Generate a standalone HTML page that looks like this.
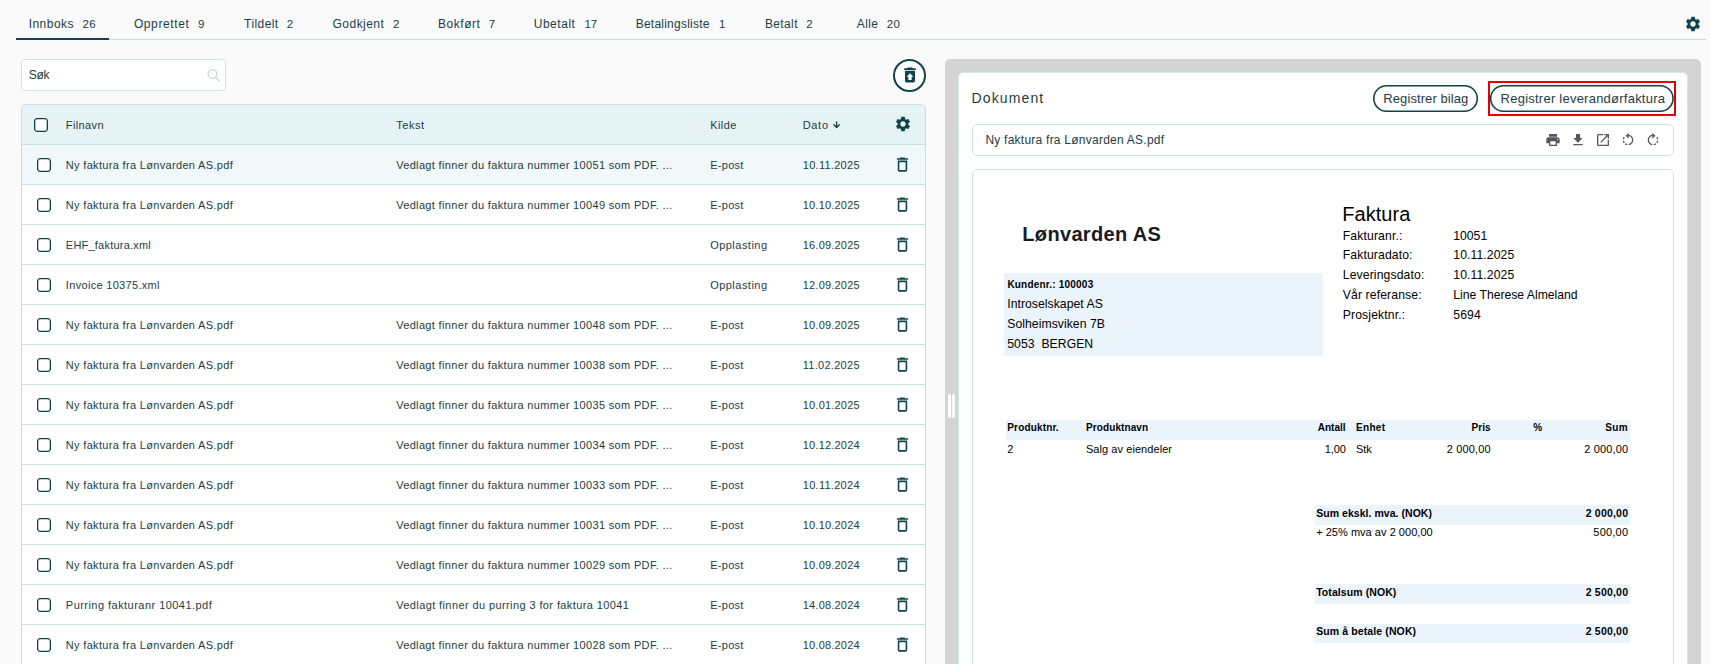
<!DOCTYPE html>
<html lang="no">
<head>
<meta charset="utf-8">
<title>Innboks</title>
<style>
html,body{margin:0;padding:0;}
body{width:1710px;height:664px;overflow:hidden;background:#fafafa;position:relative;font-family:"Liberation Sans",sans-serif;}
.t{position:absolute;white-space:pre;line-height:20px;height:20px;}
.a{position:absolute;}
svg{position:absolute;display:block;}
.cb{position:absolute;width:12px;height:12px;border:1px solid #0e4048;border-radius:3px;background:#fff;box-shadow:inset 0 0 0 0.3px #0e4048;}
.row{position:absolute;left:22px;width:903px;height:39px;border-top:1px solid #c6e0e4;background:#fff;}
.band{position:absolute;background:#ebf4fb;}
</style>
</head>
<body>
<!-- tabs line -->
<div class="a" style="left:16px;top:39px;width:1690px;height:1px;background:#c6e0e4"></div>
<div class="a" style="left:16px;top:38px;width:93px;height:2px;background:#10434b"></div>
<!-- top right gear -->
<svg style="left:1684px;top:15px" width="18" height="18" viewBox="0 0 24 24"><path fill="#10434b" d="M19.14 12.94c.04-.3.06-.61.06-.94 0-.32-.02-.64-.07-.94l2.03-1.58c.18-.14.23-.41.12-.61l-1.92-3.32c-.12-.22-.37-.29-.59-.22l-2.39.96c-.5-.38-1.03-.7-1.62-.94l-.36-2.54c-.04-.24-.24-.41-.48-.41h-3.84c-.24 0-.43.17-.47.41l-.36 2.54c-.59.24-1.13.57-1.62.94l-2.39-.96c-.22-.08-.47 0-.59.22L2.74 8.87c-.12.21-.08.47.12.61l2.03 1.58c-.05.3-.09.63-.09.94s.02.64.07.94l-2.03 1.58c-.18.14-.23.41-.12.61l1.92 3.32c.12.22.37.29.59.22l2.39-.96c.5.38 1.03.7 1.62.94l.36 2.54c.05.24.24.41.48.41h3.84c.24 0 .44-.17.47-.41l.36-2.54c.59-.24 1.13-.56 1.62-.94l2.39.96c.22.08.47 0 .59-.22l1.92-3.32c.12-.22.07-.47-.12-.61l-2.01-1.58zM12 15.6c-1.98 0-3.6-1.62-3.6-3.6s1.62-3.6 3.6-3.6 3.6 1.62 3.6 3.6-1.62 3.6-3.6 3.6z"/></svg>
<!-- search -->
<div class="a" style="left:21px;top:59px;width:203px;height:30px;border:1px solid #cfe4e8;border-radius:4px;background:#fff"></div>
<svg style="left:204.7px;top:67px" width="17" height="17" viewBox="0 0 24 24" fill="none" stroke="#c6cee0" stroke-width="1.6" stroke-linecap="round"><circle cx="10.5" cy="10" r="6.2"/><path d="M15.2 14.8L20.5 20.2"/></svg>
<!-- circle restore button -->
<div class="a" style="left:893px;top:58.5px;width:29px;height:29px;border:2px solid #10434b;border-radius:50%;background:#fff"></div>
<svg style="left:899.5px;top:64.5px" width="20" height="20" viewBox="0 0 24 24"><path fill="#10434b" d="M19 4h-3.500l-1-1h-5l-1 1H5v2h14zM6 19c0 1.100.9 2 2 2h8c1.100 0 2-.9 2-2V7H6v12zm8-5v4h-4v-4H8l4-4 4 4h-2z"/></svg>
<!-- table -->
<div class="a" style="left:21px;top:104px;width:903px;height:600px;border:1px solid #c6e0e4;border-radius:5px 5px 0 0;background:#fff;overflow:hidden">
<div class="a" style="left:0;top:0;width:903px;height:39px;background:#e6f3f5"></div>
</div>
<div class="row" style="top:144px;background:#f0f8fa"></div>
<div class="cb" style="left:37px;top:158px"></div>
<svg style="left:893.2px;top:154.75px" width="19" height="19" viewBox="0 0 24 24"><path fill="#10434b" d="M6 19c0 1.100.9 2 2 2h8c1.100 0 2-.9 2-2V7H6v12zM8 9h8v10H8V9zm7.500-5l-1-1h-5l-1 1H5v2h14V4h-3.500z"/></svg>
<div class="row" style="top:184px;background:#fff"></div>
<div class="cb" style="left:37px;top:198px"></div>
<svg style="left:893.2px;top:194.75px" width="19" height="19" viewBox="0 0 24 24"><path fill="#10434b" d="M6 19c0 1.100.9 2 2 2h8c1.100 0 2-.9 2-2V7H6v12zM8 9h8v10H8V9zm7.500-5l-1-1h-5l-1 1H5v2h14V4h-3.500z"/></svg>
<div class="row" style="top:224px;background:#fff"></div>
<div class="cb" style="left:37px;top:238px"></div>
<svg style="left:893.2px;top:234.75px" width="19" height="19" viewBox="0 0 24 24"><path fill="#10434b" d="M6 19c0 1.100.9 2 2 2h8c1.100 0 2-.9 2-2V7H6v12zM8 9h8v10H8V9zm7.500-5l-1-1h-5l-1 1H5v2h14V4h-3.500z"/></svg>
<div class="row" style="top:264px;background:#fff"></div>
<div class="cb" style="left:37px;top:278px"></div>
<svg style="left:893.2px;top:274.75px" width="19" height="19" viewBox="0 0 24 24"><path fill="#10434b" d="M6 19c0 1.100.9 2 2 2h8c1.100 0 2-.9 2-2V7H6v12zM8 9h8v10H8V9zm7.500-5l-1-1h-5l-1 1H5v2h14V4h-3.500z"/></svg>
<div class="row" style="top:304px;background:#fff"></div>
<div class="cb" style="left:37px;top:318px"></div>
<svg style="left:893.2px;top:314.75px" width="19" height="19" viewBox="0 0 24 24"><path fill="#10434b" d="M6 19c0 1.100.9 2 2 2h8c1.100 0 2-.9 2-2V7H6v12zM8 9h8v10H8V9zm7.500-5l-1-1h-5l-1 1H5v2h14V4h-3.500z"/></svg>
<div class="row" style="top:344px;background:#fff"></div>
<div class="cb" style="left:37px;top:358px"></div>
<svg style="left:893.2px;top:354.75px" width="19" height="19" viewBox="0 0 24 24"><path fill="#10434b" d="M6 19c0 1.100.9 2 2 2h8c1.100 0 2-.9 2-2V7H6v12zM8 9h8v10H8V9zm7.500-5l-1-1h-5l-1 1H5v2h14V4h-3.500z"/></svg>
<div class="row" style="top:384px;background:#fff"></div>
<div class="cb" style="left:37px;top:398px"></div>
<svg style="left:893.2px;top:394.75px" width="19" height="19" viewBox="0 0 24 24"><path fill="#10434b" d="M6 19c0 1.100.9 2 2 2h8c1.100 0 2-.9 2-2V7H6v12zM8 9h8v10H8V9zm7.500-5l-1-1h-5l-1 1H5v2h14V4h-3.500z"/></svg>
<div class="row" style="top:424px;background:#fff"></div>
<div class="cb" style="left:37px;top:438px"></div>
<svg style="left:893.2px;top:434.75px" width="19" height="19" viewBox="0 0 24 24"><path fill="#10434b" d="M6 19c0 1.100.9 2 2 2h8c1.100 0 2-.9 2-2V7H6v12zM8 9h8v10H8V9zm7.500-5l-1-1h-5l-1 1H5v2h14V4h-3.500z"/></svg>
<div class="row" style="top:464px;background:#fff"></div>
<div class="cb" style="left:37px;top:478px"></div>
<svg style="left:893.2px;top:474.75px" width="19" height="19" viewBox="0 0 24 24"><path fill="#10434b" d="M6 19c0 1.100.9 2 2 2h8c1.100 0 2-.9 2-2V7H6v12zM8 9h8v10H8V9zm7.500-5l-1-1h-5l-1 1H5v2h14V4h-3.500z"/></svg>
<div class="row" style="top:504px;background:#fff"></div>
<div class="cb" style="left:37px;top:518px"></div>
<svg style="left:893.2px;top:514.75px" width="19" height="19" viewBox="0 0 24 24"><path fill="#10434b" d="M6 19c0 1.100.9 2 2 2h8c1.100 0 2-.9 2-2V7H6v12zM8 9h8v10H8V9zm7.500-5l-1-1h-5l-1 1H5v2h14V4h-3.500z"/></svg>
<div class="row" style="top:544px;background:#fff"></div>
<div class="cb" style="left:37px;top:558px"></div>
<svg style="left:893.2px;top:554.75px" width="19" height="19" viewBox="0 0 24 24"><path fill="#10434b" d="M6 19c0 1.100.9 2 2 2h8c1.100 0 2-.9 2-2V7H6v12zM8 9h8v10H8V9zm7.500-5l-1-1h-5l-1 1H5v2h14V4h-3.500z"/></svg>
<div class="row" style="top:584px;background:#fff"></div>
<div class="cb" style="left:37px;top:598px"></div>
<svg style="left:893.2px;top:594.75px" width="19" height="19" viewBox="0 0 24 24"><path fill="#10434b" d="M6 19c0 1.100.9 2 2 2h8c1.100 0 2-.9 2-2V7H6v12zM8 9h8v10H8V9zm7.500-5l-1-1h-5l-1 1H5v2h14V4h-3.500z"/></svg>
<div class="row" style="top:624px;background:#fff"></div>
<div class="cb" style="left:37px;top:638px"></div>
<svg style="left:893.2px;top:634.75px" width="19" height="19" viewBox="0 0 24 24"><path fill="#10434b" d="M6 19c0 1.100.9 2 2 2h8c1.100 0 2-.9 2-2V7H6v12zM8 9h8v10H8V9zm7.500-5l-1-1h-5l-1 1H5v2h14V4h-3.500z"/></svg>
<div class="cb" style="left:34px;top:118px"></div>
<!-- header icons -->
<svg style="left:894px;top:114.500px" width="18" height="18" viewBox="0 0 24 24"><path fill="#10434b" d="M19.14 12.94c.04-.3.06-.61.06-.94 0-.32-.02-.64-.07-.94l2.03-1.58c.18-.14.23-.41.12-.61l-1.92-3.32c-.12-.22-.37-.29-.59-.22l-2.39.96c-.5-.38-1.03-.7-1.62-.94l-.36-2.54c-.04-.24-.24-.41-.48-.41h-3.84c-.24 0-.43.17-.47.41l-.36 2.54c-.59.24-1.13.57-1.62.94l-2.39-.96c-.22-.08-.47 0-.59.22L2.74 8.87c-.12.21-.08.47.12.61l2.03 1.58c-.05.3-.09.63-.09.94s.02.64.07.94l-2.03 1.58c-.18.14-.23.41-.12.61l1.92 3.32c.12.22.37.29.59.22l2.39-.96c.5.38 1.03.7 1.62.94l.36 2.54c.05.24.24.41.48.41h3.84c.24 0 .44-.17.47-.41l.36-2.54c.59-.24 1.13-.56 1.62-.94l2.39.96c.22.08.47 0 .59-.22l1.92-3.32c.12-.22.07-.47-.12-.61l-2.01-1.58zM12 15.6c-1.98 0-3.6-1.62-3.6-3.6s1.62-3.6 3.6-3.6 3.6 1.62 3.6 3.600-1.620 3.600-3.600 3.600z"/></svg>
<svg style="left:832px;top:119px" width="10" height="10" viewBox="0 0 10 10" fill="none" stroke="#10434b" stroke-width="1.35" stroke-linecap="round" stroke-linejoin="round"><path d="M4.600 2.800V8.400M1.900 5.700L4.600 8.500L7.300 5.700"/></svg>
<!-- right panel -->
<div class="a" style="left:945px;top:59px;width:756px;height:700px;border-radius:5px;background:#d4d4d4"></div>
<div class="a" style="left:948px;top:394px;width:3px;height:24px;border-radius:1.5px;background:#fff"></div>
<div class="a" style="left:952px;top:394px;width:3px;height:24px;border-radius:1.5px;background:#fff"></div>
<div class="a" style="left:958px;top:72px;width:728px;height:700px;border:1px solid #d3e8ec;border-radius:5px;background:#fff"></div>
<!-- buttons -->
<svg style="left:1372px;top:84px" width="108" height="30" viewBox="0 0 108 30"><rect x="1.800" y="1.750" width="103.500" height="25.500" rx="12.750" fill="#fff" stroke="#10434b" stroke-width="1.600"/></svg>
<div class="a" style="left:1488px;top:81px;width:184px;height:30.500px;border:2px solid #e50000"></div>
<svg style="left:1489px;top:84px" width="187" height="30" viewBox="0 0 187 30"><rect x="1.650" y="1.750" width="182.400" height="25.500" rx="12.750" fill="#fff" stroke="#10434b" stroke-width="1.600"/></svg>
<!-- file bar -->
<div class="a" style="left:972px;top:124px;width:700px;height:30px;border:1px solid #cfe4e8;border-radius:5px;background:#fff"></div>
<svg style="left:1545px;top:132px" width="16" height="16" viewBox="0 0 24 24"><path fill="#54595f" d="M19 8H5c-1.660 0-3 1.340-3 3v6h4v4h12v-4h4v-6c0-1.660-1.340-3-3-3zm-3 11H8v-5h8v5zm3-7c-.55 0-1-.45-1-1s.45-1 1-1 1 .45 1 1-.45 1-1 1zm-1-9H6v4h12V3z"/></svg>
<svg style="left:1570px;top:132px" width="16" height="16" viewBox="0 0 24 24"><path fill="#54595f" d="M19 9h-4V3H9v6H5l7 7 7-7zM5 18v2h14v-2H5z"/></svg>
<svg style="left:1595px;top:131.500px" width="16" height="16" viewBox="0 0 24 24"><path fill="#54595f" d="M19 19H5V5h7V3H5c-1.110 0-2 .9-2 2v14c0 1.100.89 2 2 2h14c1.100 0 2-.9 2-2v-7h-2v7zM14 3v2h3.590l-9.830 9.830 1.410 1.410L19 6.410V10h2V3h-7z"/></svg>
<svg style="left:1620px;top:131.7px" width="16" height="16" viewBox="0 0 24 24"><path fill="#54595f" d="M7.110 8.530L5.700 7.110C4.800 8.270 4.240 9.610 4.070 11h2.020c.14-.87.49-1.720 1.020-2.470zM6.090 13H4.070c.17 1.390.72 2.730 1.620 3.890l1.410-1.420c-.52-.75-.87-1.590-1.010-2.470zm1.010 5.320c1.160.9 2.510 1.440 3.900 1.610V17.900c-.87-.15-1.710-.49-2.460-1.030L7.100 18.320zM13 4.070V1L8.450 5.550 13 10V6.090c2.840.48 5 2.940 5 5.910s-2.160 5.430-5 5.910v2.020c3.950-.49 7-3.850 7-7.930s-3.050-7.440-7-7.930z"/></svg>
<svg style="left:1645px;top:131.7px" width="16" height="16" viewBox="0 0 24 24"><path fill="#54595f" d="M15.550 5.550L11 1v3.070C7.060 4.560 4 7.920 4 12s3.050 7.440 7 7.930v-2.020c-2.840-.48-5-2.940-5-5.910s2.160-5.430 5-5.910V10l4.550-4.450zM19.930 11c-.17-1.390-.72-2.730-1.620-3.890l-1.420 1.420c.54.75.88 1.600 1.020 2.470h2.020zM13 17.900v2.020c1.390-.17 2.740-.71 3.900-1.610l-1.440-1.440c-.75.54-1.590.89-2.460 1.030zm3.890-2.420l1.420 1.410c.9-1.160 1.450-2.500 1.620-3.890h-2.020c-.14.870-.48 1.720-1.020 2.480z"/></svg>
<!-- pdf box -->
<div class="a" style="left:972px;top:169px;width:700px;height:600px;border:1px solid #cfe4e8;border-radius:5px;background:#fff"></div>
<div class="band" style="left:1004px;top:273px;width:319px;height:83px"></div>
<div class="band" style="left:1006px;top:419.700px;width:624px;height:19.900px"></div>
<div class="band" style="left:1314.500px;top:505.200px;width:315.500px;height:19.600px"></div>
<div class="band" style="left:1314.500px;top:584px;width:315.500px;height:19.500px"></div>
<div class="band" style="left:1314.500px;top:623.500px;width:315.500px;height:19.600px"></div>
<span class="t" style="left:28.68px;top:14px;font-size:12px;letter-spacing:0.467px;color:#1d3d45;">Innboks</span>
<span class="t" style="left:82.41px;top:14px;font-size:11.5px;letter-spacing:0.379px;color:#1d3d45;">26</span>
<span class="t" style="left:133.88px;top:14px;font-size:12px;letter-spacing:0.608px;color:#1d3d45;">Opprettet</span>
<span class="t" style="left:197.91px;top:14px;font-size:11.5px;letter-spacing:0.000px;color:#1d3d45;">9</span>
<span class="t" style="left:244.08px;top:14px;font-size:12px;letter-spacing:0.419px;color:#1d3d45;">Tildelt</span>
<span class="t" style="left:286.81px;top:14px;font-size:11.5px;letter-spacing:0.000px;color:#1d3d45;">2</span>
<span class="t" style="left:332.58px;top:14px;font-size:12px;letter-spacing:0.459px;color:#1d3d45;">Godkjent</span>
<span class="t" style="left:392.91px;top:14px;font-size:11.5px;letter-spacing:0.000px;color:#1d3d45;">2</span>
<span class="t" style="left:438.08px;top:14px;font-size:12px;letter-spacing:0.533px;color:#1d3d45;">Bokført</span>
<span class="t" style="left:488.81px;top:14px;font-size:11.5px;letter-spacing:0.000px;color:#1d3d45;">7</span>
<span class="t" style="left:533.68px;top:14px;font-size:12px;letter-spacing:0.540px;color:#1d3d45;">Ubetalt</span>
<span class="t" style="left:584.61px;top:14px;font-size:11.5px;letter-spacing:-0.221px;color:#1d3d45;">17</span>
<span class="t" style="left:635.68px;top:14px;font-size:12px;letter-spacing:0.235px;color:#1d3d45;">Betalingsliste</span>
<span class="t" style="left:719.01px;top:14px;font-size:11.5px;letter-spacing:0.000px;color:#1d3d45;">1</span>
<span class="t" style="left:764.88px;top:14px;font-size:12px;letter-spacing:0.386px;color:#1d3d45;">Betalt</span>
<span class="t" style="left:806.31px;top:14px;font-size:11.5px;letter-spacing:0.000px;color:#1d3d45;">2</span>
<span class="t" style="left:856.78px;top:14px;font-size:12px;letter-spacing:0.398px;color:#1d3d45;">Alle</span>
<span class="t" style="left:886.81px;top:14px;font-size:11.5px;letter-spacing:0.429px;color:#1d3d45;">20</span>
<span class="t" style="left:28.68px;top:65px;font-size:12px;letter-spacing:-0.211px;color:#1d3d45;">Søk</span>
<span class="t" style="left:65.84px;top:115px;font-size:11px;letter-spacing:0.377px;color:#1d3d45;">Filnavn</span>
<span class="t" style="left:396.14px;top:115px;font-size:11px;letter-spacing:0.585px;color:#1d3d45;">Tekst</span>
<span class="t" style="left:710.14px;top:115px;font-size:11px;letter-spacing:0.428px;color:#1d3d45;">Kilde</span>
<span class="t" style="left:802.64px;top:115px;font-size:11px;letter-spacing:0.716px;color:#1d3d45;">Dato</span>
<span class="t" style="left:65.84px;top:155px;font-size:11px;letter-spacing:0.324px;color:#1d3d45;">Ny faktura fra Lønvarden AS.pdf</span>
<span class="t" style="left:396.14px;top:155px;font-size:11px;letter-spacing:0.340px;color:#1d3d45;">Vedlagt finner du faktura nummer 10051 som PDF. ...</span>
<span class="t" style="left:710.14px;top:155px;font-size:11px;letter-spacing:0.301px;color:#1d3d45;">E-post</span>
<span class="t" style="left:802.74px;top:155px;font-size:11px;letter-spacing:0.286px;color:#1d3d45;">10.11.2025</span>
<span class="t" style="left:65.84px;top:195px;font-size:11px;letter-spacing:0.324px;color:#1d3d45;">Ny faktura fra Lønvarden AS.pdf</span>
<span class="t" style="left:396.14px;top:195px;font-size:11px;letter-spacing:0.340px;color:#1d3d45;">Vedlagt finner du faktura nummer 10049 som PDF. ...</span>
<span class="t" style="left:710.14px;top:195px;font-size:11px;letter-spacing:0.301px;color:#1d3d45;">E-post</span>
<span class="t" style="left:802.74px;top:195px;font-size:11px;letter-spacing:0.205px;color:#1d3d45;">10.10.2025</span>
<span class="t" style="left:65.84px;top:235px;font-size:11px;letter-spacing:0.219px;color:#1d3d45;">EHF_faktura.xml</span>
<span class="t" style="left:710.14px;top:235px;font-size:11px;letter-spacing:0.481px;color:#1d3d45;">Opplasting</span>
<span class="t" style="left:802.74px;top:235px;font-size:11px;letter-spacing:0.205px;color:#1d3d45;">16.09.2025</span>
<span class="t" style="left:65.84px;top:275px;font-size:11px;letter-spacing:0.314px;color:#1d3d45;">Invoice 10375.xml</span>
<span class="t" style="left:710.14px;top:275px;font-size:11px;letter-spacing:0.481px;color:#1d3d45;">Opplasting</span>
<span class="t" style="left:802.74px;top:275px;font-size:11px;letter-spacing:0.205px;color:#1d3d45;">12.09.2025</span>
<span class="t" style="left:65.84px;top:315px;font-size:11px;letter-spacing:0.324px;color:#1d3d45;">Ny faktura fra Lønvarden AS.pdf</span>
<span class="t" style="left:396.14px;top:315px;font-size:11px;letter-spacing:0.340px;color:#1d3d45;">Vedlagt finner du faktura nummer 10048 som PDF. ...</span>
<span class="t" style="left:710.14px;top:315px;font-size:11px;letter-spacing:0.301px;color:#1d3d45;">E-post</span>
<span class="t" style="left:802.74px;top:315px;font-size:11px;letter-spacing:0.205px;color:#1d3d45;">10.09.2025</span>
<span class="t" style="left:65.84px;top:355px;font-size:11px;letter-spacing:0.324px;color:#1d3d45;">Ny faktura fra Lønvarden AS.pdf</span>
<span class="t" style="left:396.14px;top:355px;font-size:11px;letter-spacing:0.340px;color:#1d3d45;">Vedlagt finner du faktura nummer 10038 som PDF. ...</span>
<span class="t" style="left:710.14px;top:355px;font-size:11px;letter-spacing:0.301px;color:#1d3d45;">E-post</span>
<span class="t" style="left:802.74px;top:355px;font-size:11px;letter-spacing:0.286px;color:#1d3d45;">11.02.2025</span>
<span class="t" style="left:65.84px;top:395px;font-size:11px;letter-spacing:0.324px;color:#1d3d45;">Ny faktura fra Lønvarden AS.pdf</span>
<span class="t" style="left:396.14px;top:395px;font-size:11px;letter-spacing:0.340px;color:#1d3d45;">Vedlagt finner du faktura nummer 10035 som PDF. ...</span>
<span class="t" style="left:710.14px;top:395px;font-size:11px;letter-spacing:0.301px;color:#1d3d45;">E-post</span>
<span class="t" style="left:802.74px;top:395px;font-size:11px;letter-spacing:0.205px;color:#1d3d45;">10.01.2025</span>
<span class="t" style="left:65.84px;top:435px;font-size:11px;letter-spacing:0.324px;color:#1d3d45;">Ny faktura fra Lønvarden AS.pdf</span>
<span class="t" style="left:396.14px;top:435px;font-size:11px;letter-spacing:0.340px;color:#1d3d45;">Vedlagt finner du faktura nummer 10034 som PDF. ...</span>
<span class="t" style="left:710.14px;top:435px;font-size:11px;letter-spacing:0.301px;color:#1d3d45;">E-post</span>
<span class="t" style="left:802.74px;top:435px;font-size:11px;letter-spacing:0.205px;color:#1d3d45;">10.12.2024</span>
<span class="t" style="left:65.84px;top:475px;font-size:11px;letter-spacing:0.324px;color:#1d3d45;">Ny faktura fra Lønvarden AS.pdf</span>
<span class="t" style="left:396.14px;top:475px;font-size:11px;letter-spacing:0.340px;color:#1d3d45;">Vedlagt finner du faktura nummer 10033 som PDF. ...</span>
<span class="t" style="left:710.14px;top:475px;font-size:11px;letter-spacing:0.301px;color:#1d3d45;">E-post</span>
<span class="t" style="left:802.74px;top:475px;font-size:11px;letter-spacing:0.286px;color:#1d3d45;">10.11.2024</span>
<span class="t" style="left:65.84px;top:515px;font-size:11px;letter-spacing:0.324px;color:#1d3d45;">Ny faktura fra Lønvarden AS.pdf</span>
<span class="t" style="left:396.14px;top:515px;font-size:11px;letter-spacing:0.340px;color:#1d3d45;">Vedlagt finner du faktura nummer 10031 som PDF. ...</span>
<span class="t" style="left:710.14px;top:515px;font-size:11px;letter-spacing:0.301px;color:#1d3d45;">E-post</span>
<span class="t" style="left:802.74px;top:515px;font-size:11px;letter-spacing:0.205px;color:#1d3d45;">10.10.2024</span>
<span class="t" style="left:65.84px;top:555px;font-size:11px;letter-spacing:0.324px;color:#1d3d45;">Ny faktura fra Lønvarden AS.pdf</span>
<span class="t" style="left:396.14px;top:555px;font-size:11px;letter-spacing:0.340px;color:#1d3d45;">Vedlagt finner du faktura nummer 10029 som PDF. ...</span>
<span class="t" style="left:710.14px;top:555px;font-size:11px;letter-spacing:0.301px;color:#1d3d45;">E-post</span>
<span class="t" style="left:802.74px;top:555px;font-size:11px;letter-spacing:0.205px;color:#1d3d45;">10.09.2024</span>
<span class="t" style="left:65.84px;top:595px;font-size:11px;letter-spacing:0.462px;color:#1d3d45;">Purring fakturanr 10041.pdf</span>
<span class="t" style="left:396.14px;top:595px;font-size:11px;letter-spacing:0.399px;color:#1d3d45;">Vedlagt finner du purring 3 for faktura 10041</span>
<span class="t" style="left:710.14px;top:595px;font-size:11px;letter-spacing:0.301px;color:#1d3d45;">E-post</span>
<span class="t" style="left:802.74px;top:595px;font-size:11px;letter-spacing:0.205px;color:#1d3d45;">14.08.2024</span>
<span class="t" style="left:65.84px;top:635px;font-size:11px;letter-spacing:0.324px;color:#1d3d45;">Ny faktura fra Lønvarden AS.pdf</span>
<span class="t" style="left:396.14px;top:635px;font-size:11px;letter-spacing:0.340px;color:#1d3d45;">Vedlagt finner du faktura nummer 10028 som PDF. ...</span>
<span class="t" style="left:710.14px;top:635px;font-size:11px;letter-spacing:0.301px;color:#1d3d45;">E-post</span>
<span class="t" style="left:802.74px;top:635px;font-size:11px;letter-spacing:0.205px;color:#1d3d45;">10.08.2024</span>
<span class="t" style="left:971.56px;top:88px;font-size:14px;letter-spacing:1.124px;color:#1d3d45;">Dokument</span>
<span class="t" style="left:1383.32px;top:89px;font-size:13px;letter-spacing:0.086px;color:#1d3d45;">Registrer bilag</span>
<span class="t" style="left:1500.62px;top:89px;font-size:13px;letter-spacing:0.236px;color:#1d3d45;">Registrer leverandørfaktura</span>
<span class="t" style="left:985.38px;top:130px;font-size:12px;letter-spacing:0.242px;color:#1d3d45;">Ny faktura fra Lønvarden AS.pdf</span>
<span class="t" style="left:1022.30px;top:224px;font-size:20px;letter-spacing:0.335px;color:#1a1a1e;font-weight:700;">Lønvarden AS</span>
<span class="t" style="left:1007.40px;top:275px;font-size:10px;letter-spacing:0.199px;color:#000;font-weight:700;">Kundenr.: 100003</span>
<span class="t" style="left:1007.27px;top:294px;font-size:12.2px;letter-spacing:0.041px;color:#000;">Introselskapet AS</span>
<span class="t" style="left:1007.27px;top:314px;font-size:12.2px;letter-spacing:0.047px;color:#000;">Solheimsviken 7B</span>
<span class="t" style="left:1007.27px;top:334px;font-size:12.2px;letter-spacing:0.047px;color:#000;">5053  BERGEN</span>
<span class="t" style="left:1342.20px;top:204px;font-size:20px;letter-spacing:0.071px;color:#000;">Faktura</span>
<span class="t" style="left:1342.77px;top:226px;font-size:12.2px;letter-spacing:0.133px;color:#000;">Fakturanr.:</span>
<span class="t" style="left:1453.27px;top:226px;font-size:12.2px;letter-spacing:0.006px;color:#000;">10051</span>
<span class="t" style="left:1342.77px;top:245px;font-size:12.2px;letter-spacing:0.120px;color:#000;">Fakturadato:</span>
<span class="t" style="left:1453.27px;top:245px;font-size:12.2px;letter-spacing:0.100px;color:#000;">10.11.2025</span>
<span class="t" style="left:1342.77px;top:265px;font-size:12.2px;letter-spacing:0.120px;color:#000;">Leveringsdato:</span>
<span class="t" style="left:1453.27px;top:265px;font-size:12.2px;letter-spacing:0.100px;color:#000;">10.11.2025</span>
<span class="t" style="left:1342.77px;top:285px;font-size:12.2px;letter-spacing:0.120px;color:#000;">Vår referanse:</span>
<span class="t" style="left:1453.27px;top:285px;font-size:12.2px;letter-spacing:-0.005px;color:#000;">Line Therese Almeland</span>
<span class="t" style="left:1342.77px;top:305px;font-size:12.2px;letter-spacing:0.120px;color:#000;">Prosjektnr.:</span>
<span class="t" style="left:1453.27px;top:305px;font-size:12.2px;letter-spacing:0.100px;color:#000;">5694</span>
<span class="t" style="left:1007.30px;top:418px;font-size:10px;letter-spacing:0.150px;color:#000;font-weight:700;">Produktnr.</span>
<span class="t" style="left:1086.00px;top:418px;font-size:10px;letter-spacing:0.098px;color:#000;font-weight:700;">Produktnavn</span>
<span class="t" style="left:1317.70px;top:418px;font-size:10px;letter-spacing:0.037px;color:#000;font-weight:700;">Antall</span>
<span class="t" style="left:1356.10px;top:418px;font-size:10px;letter-spacing:0.284px;color:#000;font-weight:700;">Enhet</span>
<span class="t" style="left:1471.40px;top:418px;font-size:10px;letter-spacing:0.100px;color:#000;font-weight:700;">Pris</span>
<span class="t" style="left:1533.20px;top:418px;font-size:10px;letter-spacing:0.000px;color:#000;font-weight:700;">%</span>
<span class="t" style="left:1605.20px;top:418px;font-size:10px;letter-spacing:0.343px;color:#000;font-weight:700;">Sum</span>
<span class="t" style="left:1007.24px;top:439px;font-size:11px;letter-spacing:0.000px;color:#000;">2</span>
<span class="t" style="left:1085.94px;top:439px;font-size:11px;letter-spacing:0.065px;color:#000;">Salg av eiendeler</span>
<span class="t" style="left:1324.64px;top:439px;font-size:11px;letter-spacing:-0.077px;color:#000;">1,00</span>
<span class="t" style="left:1356.04px;top:439px;font-size:11px;letter-spacing:-0.098px;color:#000;">Stk</span>
<span class="t" style="left:1446.84px;top:439px;font-size:11px;letter-spacing:0.135px;color:#000;">2 000,00</span>
<span class="t" style="left:1584.34px;top:439px;font-size:11px;letter-spacing:0.123px;color:#000;">2 000,00</span>
<span class="t" style="left:1316.17px;top:503px;font-size:10.5px;letter-spacing:0.043px;color:#000;font-weight:700;">Sum ekskl. mva. (NOK)</span>
<span class="t" style="left:1585.67px;top:503px;font-size:10.5px;letter-spacing:0.210px;color:#000;font-weight:700;">2 000,00</span>
<span class="t" style="left:1316.14px;top:522px;font-size:11px;letter-spacing:0.034px;color:#000;">+ 25% mva av 2 000,00</span>
<span class="t" style="left:1593.34px;top:522px;font-size:11px;letter-spacing:0.209px;color:#000;">500,00</span>
<span class="t" style="left:1316.17px;top:582px;font-size:10.5px;letter-spacing:0.080px;color:#000;font-weight:700;">Totalsum (NOK)</span>
<span class="t" style="left:1585.67px;top:582px;font-size:10.5px;letter-spacing:0.210px;color:#000;font-weight:700;">2 500,00</span>
<span class="t" style="left:1316.17px;top:621px;font-size:10.5px;letter-spacing:0.113px;color:#000;font-weight:700;">Sum å betale (NOK)</span>
<span class="t" style="left:1585.67px;top:621px;font-size:10.5px;letter-spacing:0.210px;color:#000;font-weight:700;">2 500,00</span>
</body>
</html>
